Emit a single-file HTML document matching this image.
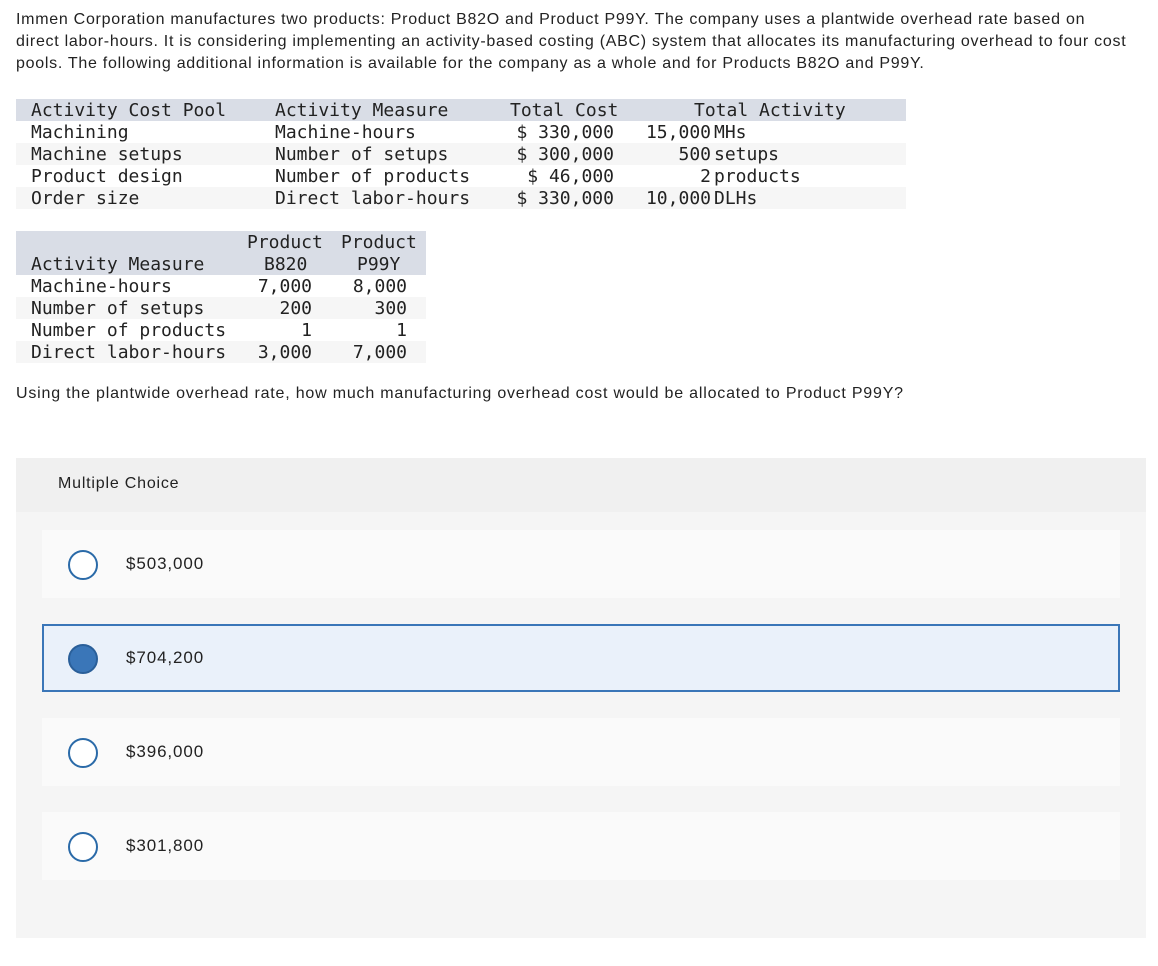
<!DOCTYPE html>
<html><head><meta charset="utf-8"><style>
body{margin:0;width:1158px;height:966px;background:#fff;position:relative;font-family:"Liberation Sans",sans-serif;color:#222;}
.p{position:absolute;left:16px;top:9px;width:1140px;font-size:16px;line-height:22px;letter-spacing:0.72px;white-space:nowrap;}
.m{font-family:"DejaVu Sans Mono","Liberation Mono",monospace;font-size:18px;color:#222;}
.row{position:absolute;height:22px;}
.t{position:absolute;line-height:22px;white-space:pre;margin-top:1px;}
.r{text-align:right;}
.box{position:absolute;left:16px;top:458px;width:1130px;height:480px;background:#f5f5f5;}
.hd{position:absolute;left:16px;top:458px;width:1130px;height:54px;background:#f0f0f0;}
.opt{position:absolute;left:42px;width:1078px;height:68px;background:#fafafa;box-sizing:border-box;}
.rad{position:absolute;left:26px;top:20px;width:26px;height:26px;border:2px solid #2a6aa8;border-radius:50%;background:#fff;}
.lbl{position:absolute;left:84px;top:24px;font-size:17px;color:#222;letter-spacing:0.9px;}
</style></head><body>
<div class="p">Immen Corporation manufactures two products: Product B82O and Product P99Y. The company uses a plantwide overhead rate based on<br>direct labor-hours. It is considering implementing an activity-based costing (ABC) system that allocates its manufacturing overhead to four cost<br>pools. The following additional information is available for the company as a whole and for Products B82O and P99Y.</div>

<div class="m">
<div class="row" style="left:16px;top:99px;width:890px;background:#d9dde6"></div>
<div class="row" style="left:16px;top:143px;width:890px;background:#f6f6f6"></div>
<div class="row" style="left:16px;top:187px;width:890px;background:#f6f6f6"></div>
<div class="t" style="left:31px;top:99px">Activity Cost Pool
Machining
Machine setups
Product design
Order size</div>
<div class="t" style="left:275px;top:99px">Activity Measure
Machine-hours
Number of setups
Number of products
Direct labor-hours</div>
<div class="t" style="left:510px;top:99px">Total Cost</div>
<div class="t r" style="left:490px;width:124px;top:121px">$ 330,000
$ 300,000
$ 46,000
$ 330,000</div>
<div class="t" style="left:694px;top:99px">Total Activity</div>
<div class="t r" style="left:600px;width:111px;top:121px">15,000
500
2
10,000</div>
<div class="t" style="left:714px;top:121px">MHs
setups
products
DLHs</div>

<div class="row" style="left:16px;top:231px;width:410px;height:44px;background:#d9dde6"></div>
<div class="row" style="left:16px;top:297px;width:410px;background:#f6f6f6"></div>
<div class="row" style="left:16px;top:341px;width:410px;background:#f6f6f6"></div>
<div class="t" style="left:31px;top:253px">Activity Measure
Machine-hours
Number of setups
Number of products
Direct labor-hours</div>
<div class="t" style="left:247px;top:231px">Product</div>
<div class="t" style="left:341px;top:231px">Product</div>
<div class="t" style="left:264px;top:253px">B820</div>
<div class="t" style="left:357px;top:253px">P99Y</div>
<div class="t r" style="left:220px;width:92px;top:275px">7,000
200
1
3,000</div>
<div class="t r" style="left:320px;width:87px;top:275px">8,000
300
1
7,000</div>
</div>

<div class="p" style="top:383px;letter-spacing:0.8px">Using the plantwide overhead rate, how much manufacturing overhead cost would be allocated to Product P99Y?</div>

<div class="box"></div><div class="hd"></div>
<div style="position:absolute;left:58px;top:475px;font-size:16px;letter-spacing:0.8px;">Multiple Choice</div>
<div class="opt" style="top:530px"><div class="rad"></div><div class="lbl">$503,000</div></div>
<div class="opt" style="top:624px;background:#eaf1fa;border:2px solid #3a76b8;height:68px"><div class="rad" style="left:24px;top:18px;background:#3a76b8;border-color:#2a5f99"></div><div class="lbl" style="left:82px;top:22px">$704,200</div></div>
<div class="opt" style="top:718px"><div class="rad"></div><div class="lbl">$396,000</div></div>
<div class="opt" style="top:812px"><div class="rad"></div><div class="lbl">$301,800</div></div>
</body></html>
